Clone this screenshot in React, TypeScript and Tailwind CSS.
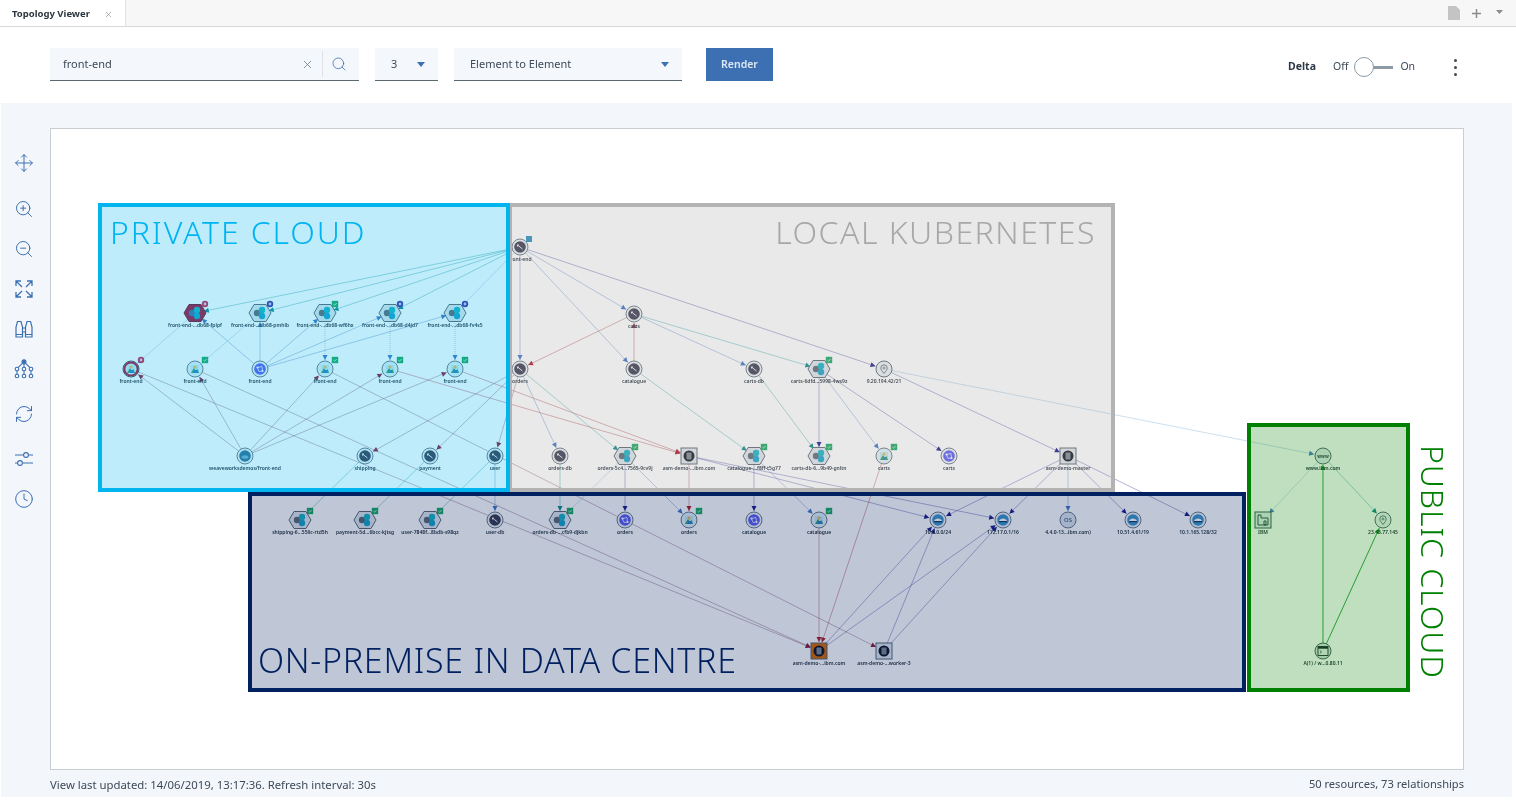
import React from 'react';
import { Clock, Move, RefreshCw, Search, X, ZoomIn, ZoomOut } from 'lucide-react';

type Kind = 'svc' | 'hex' | 'hexRed' | 'pod' | 'podRed' | 'net' | 'blue' | 'box' | 'boxOrange' | 'subnet' | 'os' | 'pin' | 'web' | 'org' | 'term';
type Badge = 'ok' | 'purple' | 'red' | 'blue';

type TopoNode = { id: string; x: number; y: number; label: string; kind: Kind; badge?: Badge };

const nodes: TopoNode[] = [
  { id: 'fe', x: 520, y: 247, label: 'front-end', kind: 'svc', badge: 'blue' },
  { id: 'h1', x: 195, y: 313, label: 'front-end-...db68-fplpf', kind: 'hexRed', badge: 'red' },
  { id: 'h2', x: 260, y: 313, label: 'front-end-...db68-pmhlb', kind: 'hex', badge: 'purple' },
  { id: 'h3', x: 325, y: 313, label: 'front-end-...db68-wf6hx', kind: 'hex', badge: 'ok' },
  { id: 'h4', x: 390, y: 313, label: 'front-end-...db68-d4jd7', kind: 'hex', badge: 'purple' },
  { id: 'h5', x: 455, y: 313, label: 'front-end-...db68-fv4s5', kind: 'hex', badge: 'purple' },
  { id: 'carts', x: 634, y: 314, label: 'carts', kind: 'svc' },
  { id: 'p0', x: 131, y: 369, label: 'front-end', kind: 'podRed', badge: 'red' },
  { id: 'p1', x: 195, y: 369, label: 'front-end', kind: 'pod', badge: 'ok' },
  { id: 'b1', x: 260, y: 369, label: 'front-end', kind: 'blue' },
  { id: 'p3', x: 325, y: 369, label: 'front-end', kind: 'pod', badge: 'ok' },
  { id: 'p4', x: 390, y: 369, label: 'front-end', kind: 'pod', badge: 'ok' },
  { id: 'p5', x: 455, y: 369, label: 'front-end', kind: 'pod', badge: 'ok' },
  { id: 'orders', x: 520, y: 369, label: 'orders', kind: 'svc' },
  { id: 'catalogue', x: 634, y: 369, label: 'catalogue', kind: 'svc' },
  { id: 'cartsdb', x: 754, y: 369, label: 'carts-db', kind: 'svc' },
  { id: 'h6', x: 819, y: 369, label: 'carts-6dfd...5998-4ws9z', kind: 'hex', badge: 'ok' },
  { id: 'ip1', x: 884, y: 369, label: '9.20.194.42/21', kind: 'pin' },
  { id: 'img', x: 245, y: 456, label: 'weaveworksdemos/front-end', kind: 'net' },
  { id: 'shipping', x: 365, y: 456, label: 'shipping', kind: 'svc' },
  { id: 'payment', x: 430, y: 456, label: 'payment', kind: 'svc' },
  { id: 'user', x: 495, y: 456, label: 'user', kind: 'svc' },
  { id: 'ordersdb', x: 560, y: 456, label: 'orders-db', kind: 'svc' },
  { id: 'h7', x: 625, y: 456, label: 'orders-5c4...7565-9cv9j', kind: 'hex', badge: 'ok' },
  { id: 'asm1', x: 689, y: 456, label: 'asm-demo-...ibm.com', kind: 'box' },
  { id: 'h8', x: 754, y: 456, label: 'catalogue-...f8ff-t5g77', kind: 'hex', badge: 'ok' },
  { id: 'h9', x: 819, y: 456, label: 'carts-db-6...9b49-gnltn', kind: 'hex', badge: 'ok' },
  { id: 'p6', x: 884, y: 456, label: 'carts', kind: 'pod', badge: 'ok' },
  { id: 'b2', x: 949, y: 456, label: 'carts', kind: 'blue' },
  { id: 'master', x: 1068, y: 456, label: 'asm-demo-master', kind: 'box' },
  { id: 'www', x: 1323, y: 456, label: 'www.ibm.com', kind: 'web' },
  { id: 'h10', x: 300, y: 520, label: 'shipping-6...55lic-rtd5h', kind: 'hex', badge: 'ok' },
  { id: 'h11', x: 365, y: 520, label: 'payment-5d...6bcc-kjtsg', kind: 'hex', badge: 'ok' },
  { id: 'h12', x: 430, y: 520, label: 'user-7848f...8bdb-s98qz', kind: 'hex', badge: 'ok' },
  { id: 'userdb', x: 495, y: 520, label: 'user-db', kind: 'svc' },
  { id: 'h13', x: 560, y: 520, label: 'orders-db-...cfb9-djkbn', kind: 'hex', badge: 'ok' },
  { id: 'b3', x: 625, y: 520, label: 'orders', kind: 'blue' },
  { id: 'p7', x: 689, y: 520, label: 'orders', kind: 'pod', badge: 'ok' },
  { id: 'b4', x: 754, y: 520, label: 'catalogue', kind: 'blue' },
  { id: 'p8', x: 819, y: 520, label: 'catalogue', kind: 'pod', badge: 'ok' },
  { id: 'n1', x: 938, y: 520, label: '10.0.0.0/24', kind: 'subnet' },
  { id: 'n2', x: 1003, y: 520, label: '172.17.0.1/16', kind: 'subnet' },
  { id: 'os', x: 1068, y: 520, label: '4.4.0-13...ibm.com)', kind: 'os' },
  { id: 'n3', x: 1133, y: 520, label: '10.51.4.61/19', kind: 'subnet' },
  { id: 'n4', x: 1198, y: 520, label: '10.1.165.128/32', kind: 'subnet' },
  { id: 'ibm', x: 1263, y: 520, label: 'IBM', kind: 'org' },
  { id: 'ip2', x: 1383, y: 520, label: '23.43.77.145', kind: 'pin' },
  { id: 'asm2', x: 819, y: 651, label: 'asm-demo-...ibm.com', kind: 'boxOrange' },
  { id: 'asm3', x: 884, y: 651, label: 'asm-demo-...worker-3', kind: 'box' },
  { id: 'dns', x: 1323, y: 651, label: 'A(1) / w...0.80.11', kind: 'term' },
];

const teal = '#1f9a9a';
const blue = '#4a7cc4';
const indigo = '#3f3f9f';
const red = '#a8323c';
const plum = '#7a4a6a';
const green = '#1e9e2e';
const sky = '#7fb2d8';

const headColor: Record<string, string> = {
  [teal]: '#0f8a8a',
  [blue]: '#3f74c4',
  [indigo]: '#1c1c8a',
  [red]: '#b01e2a',
  [plum]: '#8b1a3a',
  [green]: '#1e9e2e',
  [sky]: '#4a7cc4',
};

// from, to, colour, dotted
const edges: [string, string, string, boolean?][] = [
  ['fe', 'h1', teal], ['fe', 'h2', teal], ['fe', 'h3', teal], ['fe', 'h4', teal], ['fe', 'h5', sky],
  ['fe', 'orders', blue], ['fe', 'carts', blue], ['fe', 'catalogue', blue], ['fe', 'ip1', indigo],
  ['carts', 'orders', red], ['catalogue', 'carts', red], ['carts', 'cartsdb', blue], ['carts', 'h6', teal],
  ['b1', 'h1', blue], ['b1', 'h2', blue], ['b1', 'h3', blue], ['b1', 'h4', blue], ['b1', 'h5', blue],
  ['h1', 'p0', sky], ['h2', 'p1', sky],
  ['h3', 'p3', blue, true], ['h4', 'p4', blue, true], ['h5', 'p5', blue, true],
  ['img', 'p0', plum], ['img', 'p1', plum], ['img', 'p3', plum], ['img', 'p4', plum], ['img', 'p5', plum],
  ['p0', 'asm2', plum], ['p1', 'asm2', plum], ['p3', 'asm3', plum], ['p4', 'asm1', red], ['p5', 'asm1', red],
  ['orders', 'shipping', plum], ['orders', 'payment', plum], ['orders', 'user', plum], ['orders', 'ordersdb', blue], ['orders', 'h7', teal],
  ['catalogue', 'h8', teal], ['cartsdb', 'h9', teal], ['h6', 'h9', indigo], ['h6', 'p6', blue], ['h6', 'b2', indigo],
  ['ip1', 'master', indigo], ['ip1', 'www', sky],
  ['master', 'n1', indigo], ['master', 'n2', indigo], ['master', 'os', blue], ['master', 'n3', indigo], ['master', 'n4', indigo],
  ['asm1', 'n1', indigo], ['asm1', 'n2', indigo], ['asm1', 'p7', red], ['h8', 'b4', indigo], ['h8', 'p8', blue],
  ['h7', 'h13', sky], ['h7', 'b3', indigo], ['h7', 'p7', blue], ['ordersdb', 'h13', teal], ['user', 'userdb', blue],
  ['shipping', 'h10', teal], ['payment', 'h11', teal], ['user', 'h12', teal],
  ['p6', 'asm2', red], ['p8', 'asm2', red], ['asm2', 'n1', indigo], ['asm2', 'n2', indigo], ['asm3', 'n1', indigo], ['asm3', 'n2', indigo],
  ['www', 'ibm', sky], ['www', 'ip2', teal], ['dns', 'www', green], ['dns', 'ip2', green],
];

const find = (id: string) => nodes.find((n) => n.id === id)!;

const Edge = ({ from, to, color, dotted }: { from: string; to: string; color: string; dotted?: boolean }) => {
  const a = find(from);
  const b = find(to);
  const len = Math.hypot(b.x - a.x, b.y - a.y);
  const ux = (b.x - a.x) / len;
  const uy = (b.y - a.y) / len;
  const tipX = b.x - ux * 9;
  const tipY = b.y - uy * 9;
  const baseX = tipX - ux * 5;
  const baseY = tipY - uy * 5;
  const head = `${tipX},${tipY} ${baseX - uy * 2.5},${baseY + ux * 2.5} ${baseX + uy * 2.5},${baseY - ux * 2.5}`;
  return (
    <g>
      <line
        x1={a.x}
        y1={a.y}
        x2={tipX}
        y2={tipY}
        stroke={color}
        strokeWidth={color === green ? 1 : 0.8}
        strokeOpacity={color === green ? 0.9 : 0.5}
        strokeDasharray={dotted ? '1 1' : undefined}
      />
      <polygon points={head} fill={headColor[color]} />
    </g>
  );
};

const hexPoints = '-11,0 -6,-8.5 6,-8.5 11,0 6,8.5 -6,8.5';

const Ring = ({ fill }: { fill: string }) => (
  <>
    <circle r={8} fill="#eef3f6" stroke="#6d7a86" strokeWidth={1} />
    <circle r={5.8} fill={fill} />
  </>
);

const Glyph = ({ kind }: { kind: Kind }) => {
  switch (kind) {
    case 'svc':
      return (
        <>
          <Ring fill="#3b3b50" />
          <path d="M-2.5 -2 L2.5 2 M-2.5 -2 l1.5 0 M-2.5 -2 l0 1.5" stroke="#fff" strokeWidth={0.9} fill="none" />
        </>
      );
    case 'hex':
    case 'hexRed':
      return (
        <>
          <polygon points={hexPoints} fill={kind === 'hex' ? '#dfe6ec' : '#a3123a'} stroke={kind === 'hex' ? '#5c6873' : '#7a0f2e'} strokeWidth={1} />
          <circle cx={-3} r={3.2} fill={kind === 'hex' ? '#5c6873' : '#3d6fa8'} />
          <circle cx={2} cy={-3} r={3.2} fill="#17b3c4" />
          <circle cx={2} cy={3} r={3.2} fill="#17a3c9" />
        </>
      );
    case 'pod':
    case 'podRed':
      return (
        <>
          <circle r={8} fill="#dff0f6" stroke={kind === 'pod' ? '#6d7a86' : '#3f4a55'} strokeWidth={1} />
          {kind === 'podRed' && <circle r={6.6} fill="#d8eef6" stroke="#a3123a" strokeWidth={2} />}
          <rect x={-4} y={-4} width={8} height={8} fill="#bfe6f2" />
          <path d="M-4 4 L-1 -1 L1 2 L2.5 0 L4 4 Z" fill="#2f9c6c" />
          <circle cx={0} cy={-2} r={1.5} fill="#e9b949" />
          <rect x={-1} y={1} width={3} height={3} fill="#2f7fc4" />
        </>
      );
    case 'net':
      return (
        <>
          <Ring fill="#2f6f96" />
          <ellipse rx={3.5} ry={1.8} cy={1} fill="#bfe0ee" opacity={0.5} />
        </>
      );
    case 'blue':
      return (
        <>
          <Ring fill="#5a5cf2" />
          <path d="M-2.5 -1.5 L2 -2.5 M-2.5 -1.5 L-1 2.5 M2 -2.5 L2.5 2 M-1 2.5 L2.5 2" stroke="#fff" strokeWidth={0.7} fill="none" />
          <circle cx={-2.5} cy={-1.5} r={1.1} fill="#fff" />
          <circle cx={2.5} cy={2} r={1.1} fill="#fff" />
        </>
      );
    case 'box':
    case 'boxOrange':
      return (
        <>
          <rect x={-8} y={-8} width={16} height={16} fill={kind === 'box' ? '#dfe6ec' : '#d96a00'} stroke="#5c6873" strokeWidth={1} />
          <circle r={5.5} fill="#141420" />
          <rect x={-2.5} y={-3.5} width={5} height={7} rx={0.8} fill="#7d8791" />
        </>
      );
    case 'subnet':
      return (
        <>
          <Ring fill="#3e93c9" />
          <path d="M-4 1 C-3 -2.5 3 -2.5 4 1 Z" fill="#fff" />
          <rect x={-4} y={1} width={8} height={1.2} fill="#163a5c" />
        </>
      );
    case 'os':
      return (
        <>
          <circle r={8} fill="#dde3ee" stroke="#6d7a86" strokeWidth={1} />
          <text textAnchor="middle" y={2.2} fontSize={6} fill="#3d5a78" fontWeight={500}>
            OS
          </text>
        </>
      );
    case 'pin':
      return (
        <>
          <circle r={8} fill="#edf1f4" stroke="#5c6873" strokeWidth={1} />
          <path d="M0 4.5 C-2 2 -3.2 0.5 -3.2 -1 A3.2 3.2 0 0 1 3.2 -1 C3.2 0.5 2 2 0 4.5 Z" fill="none" stroke="#4f5c68" strokeWidth={0.8} />
          <circle cy={-1} r={1} fill="none" stroke="#4f5c68" strokeWidth={0.7} />
        </>
      );
    case 'web':
      return (
        <>
          <circle r={8} fill="#e4ecef" stroke="#5c6873" strokeWidth={1} />
          <text textAnchor="middle" y={1.6} fontSize={4.5} fill="#3a4652" fontWeight={700}>
            www
          </text>
        </>
      );
    case 'org':
      return (
        <>
          <rect x={-8} y={-8} width={16} height={16} fill="#e6edf0" stroke="#3e5a54" strokeWidth={1} />
          <path d="M-5 5 V-5 H-2 V-2 H5 V5 Z M1 1 H3 V5 H1 Z" fill="none" stroke="#22423a" strokeWidth={0.9} />
        </>
      );
    case 'term':
      return (
        <>
          <circle r={8} fill="#dbe5e2" stroke="#4f5c68" strokeWidth={1} />
          <rect x={-5} y={-4.5} width={10} height={9} fill="#edf3f1" stroke="#1f2a30" strokeWidth={0.9} />
          <rect x={-5} y={-4.5} width={10} height={2.2} fill="#1f2a30" />
          <path d="M-3.2 -0.5 L-1.5 1 L-3.2 2.5" fill="none" stroke="#1f2a30" strokeWidth={0.7} />
        </>
      );
  }
};

const NodeBadge = ({ badge }: { badge: Badge }) => {
  if (badge === 'ok') {
    return (
      <g transform="translate(10,-9)">
        <rect x={-3.2} y={-3.2} width={6.4} height={6.4} fill="#1aa860" />
        <path d="M-1.5 0.2 L-0.4 1.2 L1.6 -1" stroke="#fff" strokeWidth={0.7} fill="none" />
      </g>
    );
  }
  if (badge === 'blue') {
    return <rect x={6} y={-11} width={6} height={6} fill="#2a8fc0" />;
  }
  const fill = badge === 'red' ? '#c0224f' : '#3d2fa8';
  return (
    <g transform="translate(10,-9)">
      <circle r={3.2} fill={fill} />
      <circle r={1.4} fill={badge === 'red' ? '#f2c4d2' : '#c8c8f2'} />
    </g>
  );
};

const TopologyNode = ({ node }: { node: TopoNode }) => (
  <g transform={`translate(${node.x},${node.y})`}>
    <Glyph kind={node.kind} />
    {node.badge && <NodeBadge badge={node.badge} />}
    <text textAnchor="middle" y={13.5} fontSize={5} fontWeight={600} fill="#24303b">
      {node.label}
    </text>
  </g>
);

const ExpandIcon = () => (
  <svg width="20" height="20" viewBox="0 0 20 20" fill="none" stroke="#3d70b2" strokeWidth="1.3">
    <path d="M2 7 V2 H7 M2 2 L8 8 M13 2 H18 V7 M18 2 L12 8 M2 13 V18 H7 M2 18 L8 12 M13 18 H18 V13 M18 18 L12 12" />
  </svg>
);

const BinocularsIcon = () => (
  <svg width="20" height="20" viewBox="0 0 20 20" fill="none" stroke="#3d70b2" strokeWidth="1.2">
    <path d="M2 18 V8 L3.5 2.5 H7 L8.5 8 V18 Z M11.5 18 V8 L13 2.5 H16.5 L18 8 V18 Z M8.5 9 H11.5 M8.5 13 H11.5 M2 15.5 H8.5 M11.5 15.5 H18" />
  </svg>
);

const TreeIcon = () => (
  <svg width="20" height="20" viewBox="0 0 20 20" fill="none" stroke="#3d70b2" strokeWidth="1.1">
    <circle cx="10" cy="2.8" r="2" fill="#3d70b2" />
    <circle cx="10" cy="10" r="1.8" />
    <circle cx="3" cy="10" r="1.8" />
    <circle cx="17" cy="10" r="1.8" />
    <circle cx="3" cy="17" r="1.8" />
    <circle cx="10" cy="17" r="1.8" />
    <circle cx="17" cy="17" r="1.8" />
    <path d="M8.6 4.2 L4 8.6 M11.4 4.2 L16 8.6 M10 4.8 V8.2 M3 11.8 V15.2 M10 11.8 V15.2 M17 11.8 V15.2" />
  </svg>
);

const SlidersIcon = () => (
  <svg width="20" height="20" viewBox="0 0 20 20" fill="none" stroke="#3d70b2" strokeWidth="1.1">
    <path d="M1 6 H10 M14.5 6 H19 M1 14 H4 M8.5 14 H19" />
    <circle cx="12" cy="6" r="2.4" />
    <circle cx="6" cy="14" r="2.4" />
  </svg>
);

const Caret = () => (
  <svg width="8" height="5" viewBox="0 0 8 5">
    <path d="M0 0 H8 L4 5 Z" fill="#3d70b2" />
  </svg>
);

const iconProps = { size: 20, color: '#3d70b2', strokeWidth: 1.2 };

export default function App() {
  return (
    <div className="h-[800px] w-[1516px] overflow-hidden bg-white font-['Noto_Sans',sans-serif] text-[#3d4a57] blur-[0.3px]">
      {/* tab strip */}
      <div className="flex h-[27px] items-stretch border-b border-[#d8d8d8] bg-[#f7f7f7]">
        <div className="flex w-[126px] items-center gap-[14px] border-r border-[#e2e2e2] bg-white pl-[12px] pt-[2px]">
          <span className="text-[9.5px] leading-none font-bold whitespace-nowrap text-[#2c3640]">Topology Viewer</span>
          <X size={9} color="#9a9a9a" strokeWidth={2} />
        </div>
        <div className="ml-auto flex items-center pr-[13px]">
          <svg width="12" height="14" viewBox="0 0 12 14">
            <path d="M0 0 H8 L12 4 V14 H0 Z" fill="#c4c4c4" />
          </svg>
          <svg className="ml-[12px]" width="9" height="9" viewBox="0 0 9 9">
            <path d="M4.5 0 V9 M0 4.5 H9" stroke="#8a8a8a" strokeWidth="1.4" />
          </svg>
          <svg className="mb-[3px] ml-[15px]" width="7" height="4" viewBox="0 0 7 4">
            <path d="M0 0 H7 L3.5 4 Z" fill="#8a8a8a" />
          </svg>
        </div>
      </div>

      {/* toolbar */}
      <div className="flex h-[76px] items-center pb-px pl-[50px] text-[11px]">
        <div className="flex h-[33px] w-[309px] items-center border-b border-[#5a6872] bg-[#f4f7fb] pl-[13px]">
          <span className="flex-1">front-end</span>
          <X size={13} color="#5a6872" strokeWidth={1.3} />
          <span className="mx-[8px] h-[26px] w-px bg-[#dfe3e6]" />
          <Search size={16} color="#3d70b2" strokeWidth={1.2} className="mr-[12px]" />
        </div>
        <div className="ml-[16px] flex h-[33px] w-[63px] items-center justify-between border-b border-[#5a6872] bg-[#f4f7fb] pr-[13px] pl-[16px]">
          <span>3</span>
          <Caret />
        </div>
        <div className="ml-[16px] flex h-[33px] w-[228px] items-center justify-between border-b border-[#5a6872] bg-[#f4f7fb] pr-[13px] pl-[16px]">
          <span>Element to Element</span>
          <Caret />
        </div>
        <div className="ml-[24px] flex h-[33px] w-[67px] items-center justify-center bg-[#3d70b2] text-[10.5px] font-semibold text-[#dfe9f5]">
          Render
        </div>
        <div className="ml-[515px] flex items-center pt-[5px]">
          <span className="text-[10.5px] font-bold text-[#2c3a47]">Delta</span>
          <span className="ml-[17px] text-[10.5px]">Off</span>
          <span className="ml-[6px] flex items-center">
            <span className="z-10 h-[20px] w-[20px] rounded-full border-[1.5px] border-[#8c9ba5] bg-white" />
            <span className="-ml-px h-[3px] w-[20px] bg-[#8c9ba5]" />
          </span>
          <span className="ml-[7px] text-[10.5px]">On</span>
          <span className="ml-[39px] flex flex-col gap-[4px]">
            <span className="h-[3px] w-[3px] rounded-full bg-[#3d4a57]" />
            <span className="h-[3px] w-[3px] rounded-full bg-[#3d4a57]" />
            <span className="h-[3px] w-[3px] rounded-full bg-[#3d4a57]" />
          </span>
        </div>
      </div>

      {/* workspace */}
      <div className="ml-px flex h-[694px] w-[1511px] bg-[#f3f6fb]">
        <div className="flex w-[49px] flex-col items-center gap-[20px] pt-[50px] pr-[3px]">
          <Move {...iconProps} />
          <ZoomIn {...iconProps} className="mt-[6px]" />
          <ZoomOut {...iconProps} />
          <ExpandIcon />
          <BinocularsIcon />
          <TreeIcon />
          <RefreshCw {...iconProps} className="mt-[5px]" />
          <div className="mt-[5px]">
            <SlidersIcon />
          </div>
          <Clock {...iconProps} />
        </div>

        <div className="flex flex-col pt-[25px]">
          <div className="relative h-[642px] w-[1414px] border border-[#c9ced3] bg-white">
            <svg className="absolute inset-0 h-full w-full" viewBox="51 129 1412 640">
              {edges.map(([from, to, color, dotted]) => (
                <Edge key={`${from}-${to}`} from={from} to={to} color={color} dotted={dotted} />
              ))}
              {nodes.map((node) => (
                <TopologyNode key={node.id} node={node} />
              ))}
            </svg>

            {/* region overlays, tinted over the diagram */}
            <div className="absolute top-[74px] left-[457px] flex h-[289px] w-[607px] justify-end border-4 border-[#b3b3b3] bg-[#a8a8a8]/25 pr-[15px]">
              <span className="mt-[5px] text-[32px] leading-[40px] font-light tracking-[1.5px] text-[#a8a8a8]">LOCAL KUBERNETES</span>
            </div>
            <div className="absolute top-[74px] left-[47px] h-[289px] w-[412px] border-4 border-[#00b4f0] bg-[#00b4f0]/25 pl-[8px]">
              <span className="mt-[5px] block text-[32px] leading-[40px] font-light tracking-[1.9px] text-[#00b4f0]">PRIVATE CLOUD</span>
            </div>
            <div className="absolute top-[363px] left-[197px] flex h-[200px] w-[998px] items-end border-4 border-[#00205f] bg-[#00205f]/25 pb-[8px] pl-[6px]">
              <span className="text-[34px] leading-[40px] font-light tracking-[0.72px] text-[#00205f]">ON-PREMISE IN DATA CENTRE</span>
            </div>
            <div className="absolute top-[294px] left-[1196px] h-[269px] w-[163px] border-[4.5px] border-[#008000] bg-[#008000]/25" />
            <span className="absolute top-[316px] left-[1362px] text-[32px] leading-[40px] font-light tracking-[0.9px] text-[#008000] [writing-mode:vertical-rl]">PUBLIC CLOUD</span>
          </div>

          <div className="flex justify-between pt-[6px] text-[11.35px]">
            <span>View last updated: 14/06/2019, 13:17:36. Refresh interval: 30s</span>
            <span className="text-[11.1px]">50 resources, 73 relationships</span>
          </div>
        </div>
      </div>
    </div>
  );
}
